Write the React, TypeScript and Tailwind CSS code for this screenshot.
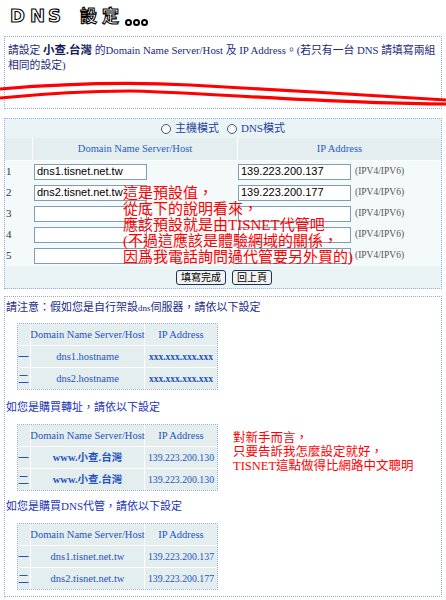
import React from "react";

/* DNS 設定 page — old-school table form with red handwritten-ish notes */

const formRows = [
  { n: "1", host: "dns1.tisnet.net.tw", ip: "139.223.200.137" },
  { n: "2", host: "dns2.tisnet.net.tw", ip: "139.223.200.177" },
  { n: "3", host: "", ip: "" },
  { n: "4", host: "", ip: "" },
  { n: "5", host: "", ip: "" },
];

type MiniRow = { n: string; host: string; ip: string };

function Title() {
  return (
    <div className="flex h-[36px] items-start pl-[10px] pt-[4px] font-['DejaVu_Sans','Noto_Sans_CJK_TC',sans-serif] font-bold text-white [-webkit-text-stroke:1.1px_#000]">
      <span className="w-[20px] text-[18px] leading-[24px]">D</span>
      <span className="w-[18px] text-[18px] leading-[24px]">N</span>
      <span className="w-[32px] text-[18px] leading-[24px]">S</span>
      <span className="w-[22px] text-[17px] leading-[24px]">設</span>
      <span className="w-[23px] text-[17px] leading-[24px]">定</span>
      <span className="flex h-[24px] items-end gap-[1px] pb-[2px]">
        <span className="h-[7px] w-[7px] rounded-full border-2 border-black bg-white" />
        <span className="h-[7px] w-[7px] rounded-full border-2 border-black bg-white" />
        <span className="h-[7px] w-[7px] rounded-full border-2 border-black bg-white" />
      </span>
    </div>
  );
}

function StrikeLines() {
  return (
    <svg
      className="pointer-events-none absolute left-0 top-0"
      width="446"
      height="120"
      viewBox="0 0 446 120"
    >
      <path
        d="M0 89 C 60 84, 130 82, 190 85 S 380 96, 446 100"
        fill="none"
        stroke="#ff0000"
        strokeWidth="3.2"
      />
      <path
        d="M0 98 C 40 94, 80 91, 130 91 S 330 104, 446 104"
        fill="none"
        stroke="#ff0000"
        strokeWidth="3.2"
      />
    </svg>
  );
}

function Radio() {
  return (
    <span className="inline-block h-[10px] w-[10px] rounded-full border border-[#3d4f86] bg-white" />
  );
}

function TextInput({ value }: { value: string }) {
  return (
    <div className="flex h-[16px] w-[113px] items-center border border-[#7f9db9] bg-white pl-[2px] font-['Liberation_Sans',sans-serif] text-[11px] text-black">
      {value}
    </div>
  );
}

function FormBox() {
  return (
    <div className="relative mx-[4px] mt-[9px] h-[171px] border border-dotted border-[#8eaee6] bg-[#eaf4f4]">
      <div className="flex h-[19px] items-center justify-center gap-[4px] text-[11px] text-[#1f3f9f]">
        <Radio />
        <span className="mr-[4px]">主機模式</span>
        <Radio />
        <span>DNS模式</span>
      </div>

      <div className="grid h-[23px] grid-cols-[27px_204px_1fr] gap-x-px border-b border-white bg-white">
        <div className="bg-[#e4eeee]" />
        <div className="flex items-center justify-center bg-[#e4eeee] text-[10.5px] text-[#2a5cc6]">
          Domain Name Server/Host
        </div>
        <div className="flex items-center justify-center bg-[#e4eeee] text-[10.5px] text-[#2a5cc6]">
          IP Address
        </div>
      </div>

      {formRows.map((r) => (
        <div
          key={r.n}
          className="grid h-[21px] grid-cols-[27px_205px_1fr] items-center bg-[#f4fafa]"
        >
          <div className="pl-[1px] text-[11px] text-[#333]">{r.n}</div>
          <div className="pl-[2px]">
            <TextInput value={r.host} />
          </div>
          <div className="flex items-center gap-[4px] pl-[1px]">
            <TextInput value={r.ip} />
            <span className="text-[9.5px] text-[#555]">(IPV4/IPV6)</span>
          </div>
        </div>
      ))}

      <div className="flex h-[22px] items-center justify-center gap-[6px] pl-[2px]">
        <button className="h-[15px] rounded-[3px] border border-[#1c2f66] bg-[#f3f3ef] px-[4px] text-[10px] leading-[13px] text-black">
          填寫完成
        </button>
        <button className="h-[15px] rounded-[3px] border border-[#1c2f66] bg-[#f3f3ef] px-[4px] text-[10px] leading-[13px] text-black">
          回上頁
        </button>
      </div>

      <div className="pointer-events-none absolute left-[118px] top-[66px] whitespace-nowrap text-[15px] leading-[16px] text-[#ff0000]">
        這是預設值，
        <br />
        從底下的說明看來，
        <br />
        應該預設就是由TISNET代管吧
        <br />
        (不過這應該是體驗網域的關係，
        <br />
        因爲我電話詢問過代管要另外買的)
      </div>
    </div>
  );
}

function MiniTable({
  rows,
  boldHost,
  boldIp,
}: {
  rows: MiniRow[];
  boldHost?: boolean;
  boldIp?: boolean;
}) {
  return (
    <div className="ml-[11px] w-[201px] shrink-0 border border-dotted border-[#8eaee6] bg-white text-[#2452c0]">
      <div className="grid grid-cols-[12px_113px_1fr] gap-px">
        <div className="h-[21px] bg-[#e4eeee]" />
        <div className="flex h-[21px] items-center justify-center whitespace-nowrap bg-[#e4eeee] text-[10.5px]">
          Domain Name Server/Host
        </div>
        <div className="flex h-[21px] items-center justify-center bg-[#e4eeee] text-[10.5px]">
          IP Address
        </div>
        {rows.map((r) => (
          <React.Fragment key={r.n}>
            <div className="flex h-[21px] items-center bg-[#e4eeee] text-[11px]">{r.n}</div>
            <div
              className={`flex h-[21px] items-center justify-center bg-[#e4eeee] text-[10.5px] ${
                boldHost ? "font-bold" : ""
              }`}
            >
              {r.host}
            </div>
            <div
              className={`flex h-[21px] items-center justify-center overflow-hidden whitespace-nowrap bg-[#e4eeee] ${
                boldIp ? "text-[9.5px] font-bold" : "text-[9.8px]"
              }`}
            >
              {r.ip}
            </div>
          </React.Fragment>
        ))}
      </div>
    </div>
  );
}

function NoteBox() {
  return (
    <div className="mx-[4px] mt-[7px] h-[301px] border border-dotted border-[#8eaee6] pl-[1px] text-[11px] leading-[14px] text-[#1b2b88]">
      <p className="pt-[3px]">
        請注意：假如您是自行架設<span className="text-[9px]">dns</span>伺服器，請依以下設定
      </p>
      <div className="mt-[8px]">
        <MiniTable
          boldIp
          rows={[
            { n: "一", host: "dns1.hostname", ip: "xxx.xxx.xxx.xxx" },
            { n: "二", host: "dns2.hostname", ip: "xxx.xxx.xxx.xxx" },
          ]}
        />
      </div>

      <p className="mt-[10px] text-[#2233bb]">如您是購買轉址，請依以下設定</p>
      <div className="mt-[10px] flex items-start">
        <MiniTable
          boldHost
          rows={[
            { n: "一", host: "www.小查.台灣", ip: "139.223.200.130" },
            { n: "二", host: "www.小查.台灣", ip: "139.223.200.130" },
          ]}
        />
        <p className="ml-[15px] mt-[7px] whitespace-nowrap text-[12.5px] leading-[14px] text-[#ff0000]">
          對新手而言，
          <br />
          只要告訴我怎麼設定就好，
          <br />
          TISNET這點做得比網路中文聰明
        </p>
      </div>

      <p className="mt-[8px] text-[#2233bb]">如您是購買DNS代管，請依以下設定</p>
      <div className="mt-[10px]">
        <MiniTable
          rows={[
            { n: "一", host: "dns1.tisnet.net.tw", ip: "139.223.200.137" },
            { n: "二", host: "dns2.tisnet.net.tw", ip: "139.223.200.177" },
          ]}
        />
      </div>
    </div>
  );
}

export default function App() {
  return (
    <div className="relative h-[600px] w-[446px] overflow-hidden bg-white font-['Liberation_Serif','Noto_Sans_CJK_TC',serif]">
      <Title />
      <div className="mx-[4px] h-[73px] border border-dotted border-[#8eaee6] px-[3px] pt-[6px] text-[10.8px] leading-[15px] text-[#1c2a7c]">
        <span className="whitespace-nowrap">
          請設定 <b className="text-[11.5px] text-[#111a5a]">小查.台灣</b> 的Domain Name
          Server/Host 及 IP Address。(若只有一台 DNS 請填寫兩組
        </span>
        <br />
        相同的設定)
      </div>
      <FormBox />
      <NoteBox />
      <StrikeLines />
    </div>
  );
}
